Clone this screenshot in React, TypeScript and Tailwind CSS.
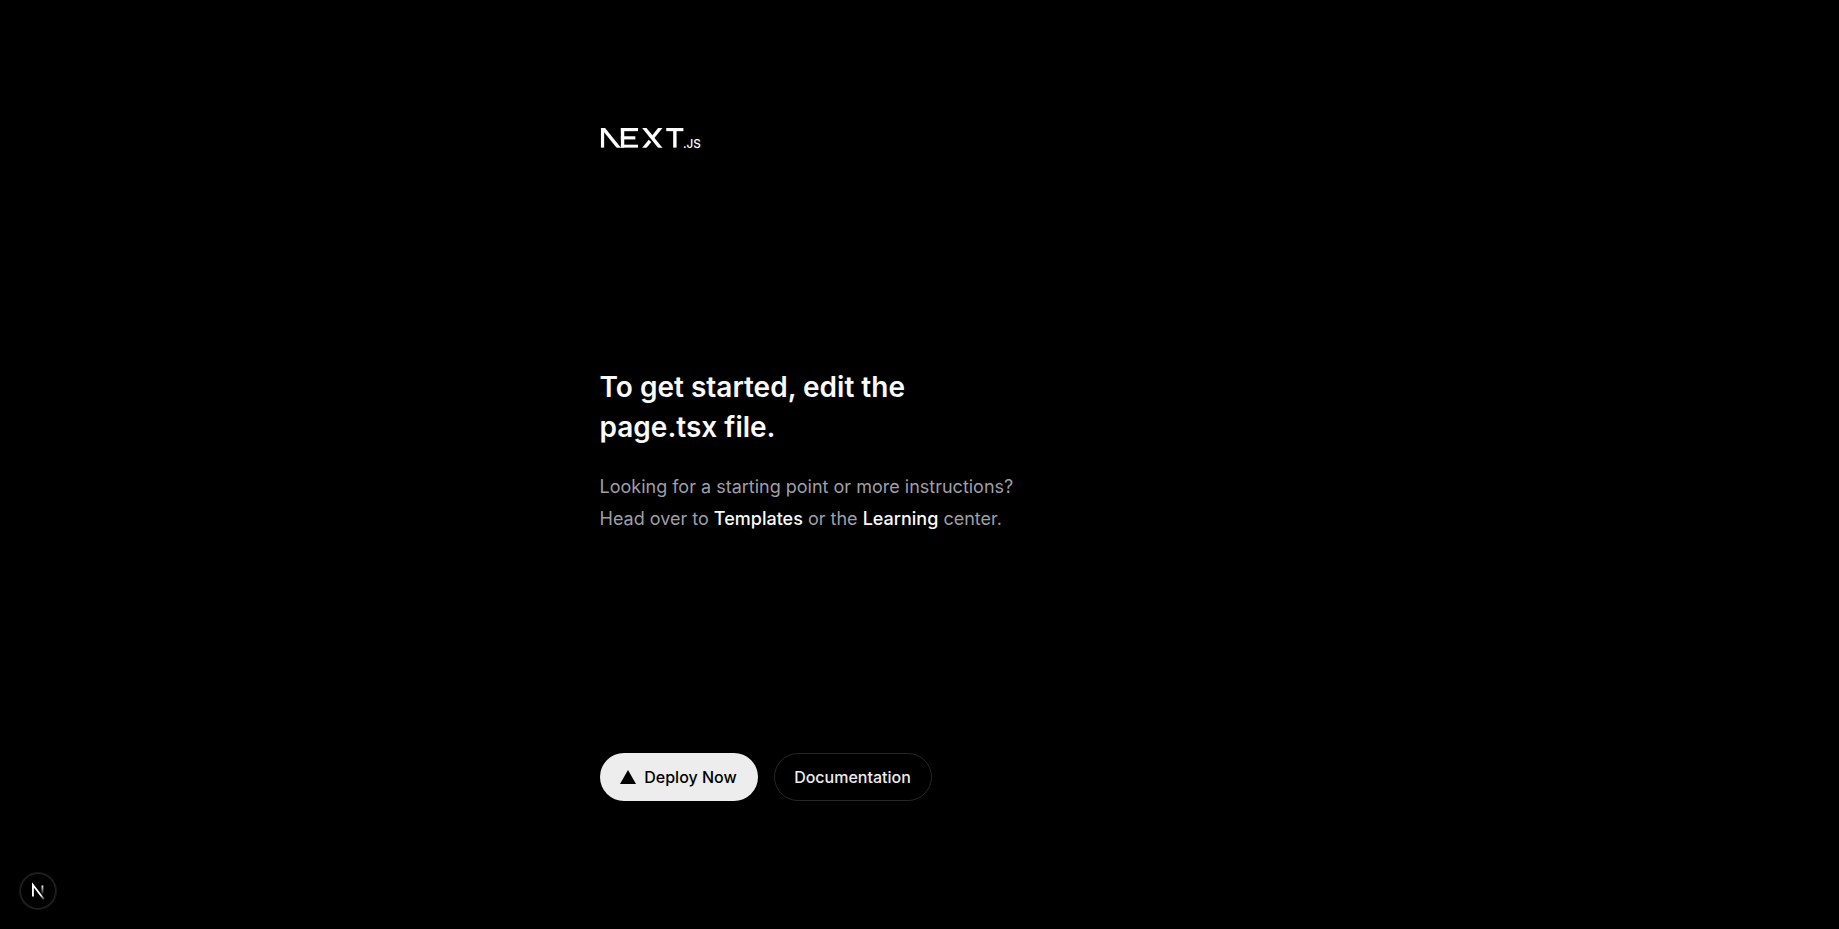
function NextLogo() {
  return (
    <svg
      className="h-5 w-[100px] overflow-visible"
      viewBox="0 0 394 80"
      fill="white"
      role="img"
      aria-label="Next.js logo"
    >
      <defs>
        <clipPath id="mark">
          <rect width="335" height="79.3" />
        </clipPath>
      </defs>
      <g clipPath="url(#mark)">
        <rect width="13.6" height="79.3" />
        <rect x="80.5" width="13.5" height="79.3" />
        <rect x="80.5" width="68.5" height="12.7" />
        <rect x="80.5" y="33.1" width="57.8" height="12.6" />
        <rect x="80.5" y="66.7" width="68.5" height="12.6" />
        <g stroke="white" strokeWidth="13.6">
          <line x1="-7.6" y1="-20" x2="88.5" y2="99.3" />
          <line x1="158.3" y1="-20" x2="254.3" y2="99.4" />
          <line x1="254.3" y1="-20" x2="206" y2="40" />
          <line x1="158.3" y1="99.4" x2="197" y2="51.3" />
        </g>
        <rect x="262" width="68.5" height="12.7" />
        <rect x="289.7" width="13.6" height="79.3" />
      </g>
      <text x="329" y="79" fontSize="47" fontFamily="Inter, sans-serif" fontWeight="500">
        .JS
      </text>
    </svg>
  );
}

function DevToolsButton() {
  return (
    <button
      type="button"
      aria-label="Open Next.js Dev Tools"
      className="fixed bottom-5 left-5 flex size-9 items-center justify-center rounded-full bg-black shadow-[0_0_0_1px_#171717,inset_0_0_0_1px_rgba(255,255,255,0.14)]"
    >
      <svg className="size-10 shrink-0" viewBox="0 0 40 40" fill="none">
        <defs>
          <linearGradient id="diagonal" x1="9.95" y1="11.12" x2="15.5" y2="17.96" gradientUnits="userSpaceOnUse">
            <stop stopColor="white" />
            <stop offset="0.8" stopColor="white" stopOpacity="0" />
            <stop offset="1" stopColor="white" stopOpacity="0" />
          </linearGradient>
          <linearGradient id="stem" x1="11.8" y1="1" x2="11.8" y2="11" gradientUnits="userSpaceOnUse">
            <stop stopColor="white" />
            <stop offset="1" stopColor="white" stopOpacity="0" />
          </linearGradient>
        </defs>
        <g transform="translate(12.6 13)">
          <path d="M13.3 15.2 L2.34 1 V12.6" stroke="url(#diagonal)" strokeWidth="1.86" />
          <path d="M11.825 1.5 V13.1" stroke="url(#stem)" strokeWidth="1.86" />
        </g>
      </svg>
    </button>
  );
}

export default function App() {
  return (
    <div className="flex min-h-screen items-center justify-center bg-black font-['Inter',sans-serif]">
      <main className="flex min-h-screen w-full max-w-3xl flex-col items-center justify-between bg-black px-16 py-32 sm:items-start">
        <NextLogo />
        <div className="flex flex-col items-center gap-6 text-center sm:items-start sm:text-left">
          <h1 className="max-w-xs text-[28px] leading-10 font-semibold text-zinc-50">
            To get started, edit the page.tsx file.
          </h1>
          <p className="max-w-md text-lg leading-8 text-zinc-400">
            Looking for a starting point or more instructions? Head over to{' '}
            <a href="#templates" className="font-medium text-zinc-50">
              Templates
            </a>{' '}
            or the{' '}
            <a href="#learning" className="font-medium text-zinc-50">
              Learning
            </a>{' '}
            center.
          </p>
        </div>
        <div className="flex flex-col gap-4 text-base font-medium sm:flex-row">
          <a
            href="#deploy"
            className="flex h-12 w-full items-center justify-center gap-2 rounded-full bg-[#ededed] px-5 text-black md:w-[158px]"
          >
            <svg width="16" height="14" viewBox="0 0 16 14" fill="black" aria-hidden="true">
              <path d="M8 0l8 13.9H0z" />
            </svg>
            Deploy Now
          </a>
          <a
            href="#docs"
            className="flex h-12 w-full items-center justify-center rounded-full border border-white/15 px-5 text-[#ededed] md:w-[158px]"
          >
            Documentation
          </a>
        </div>
      </main>
      <DevToolsButton />
    </div>
  );
}
